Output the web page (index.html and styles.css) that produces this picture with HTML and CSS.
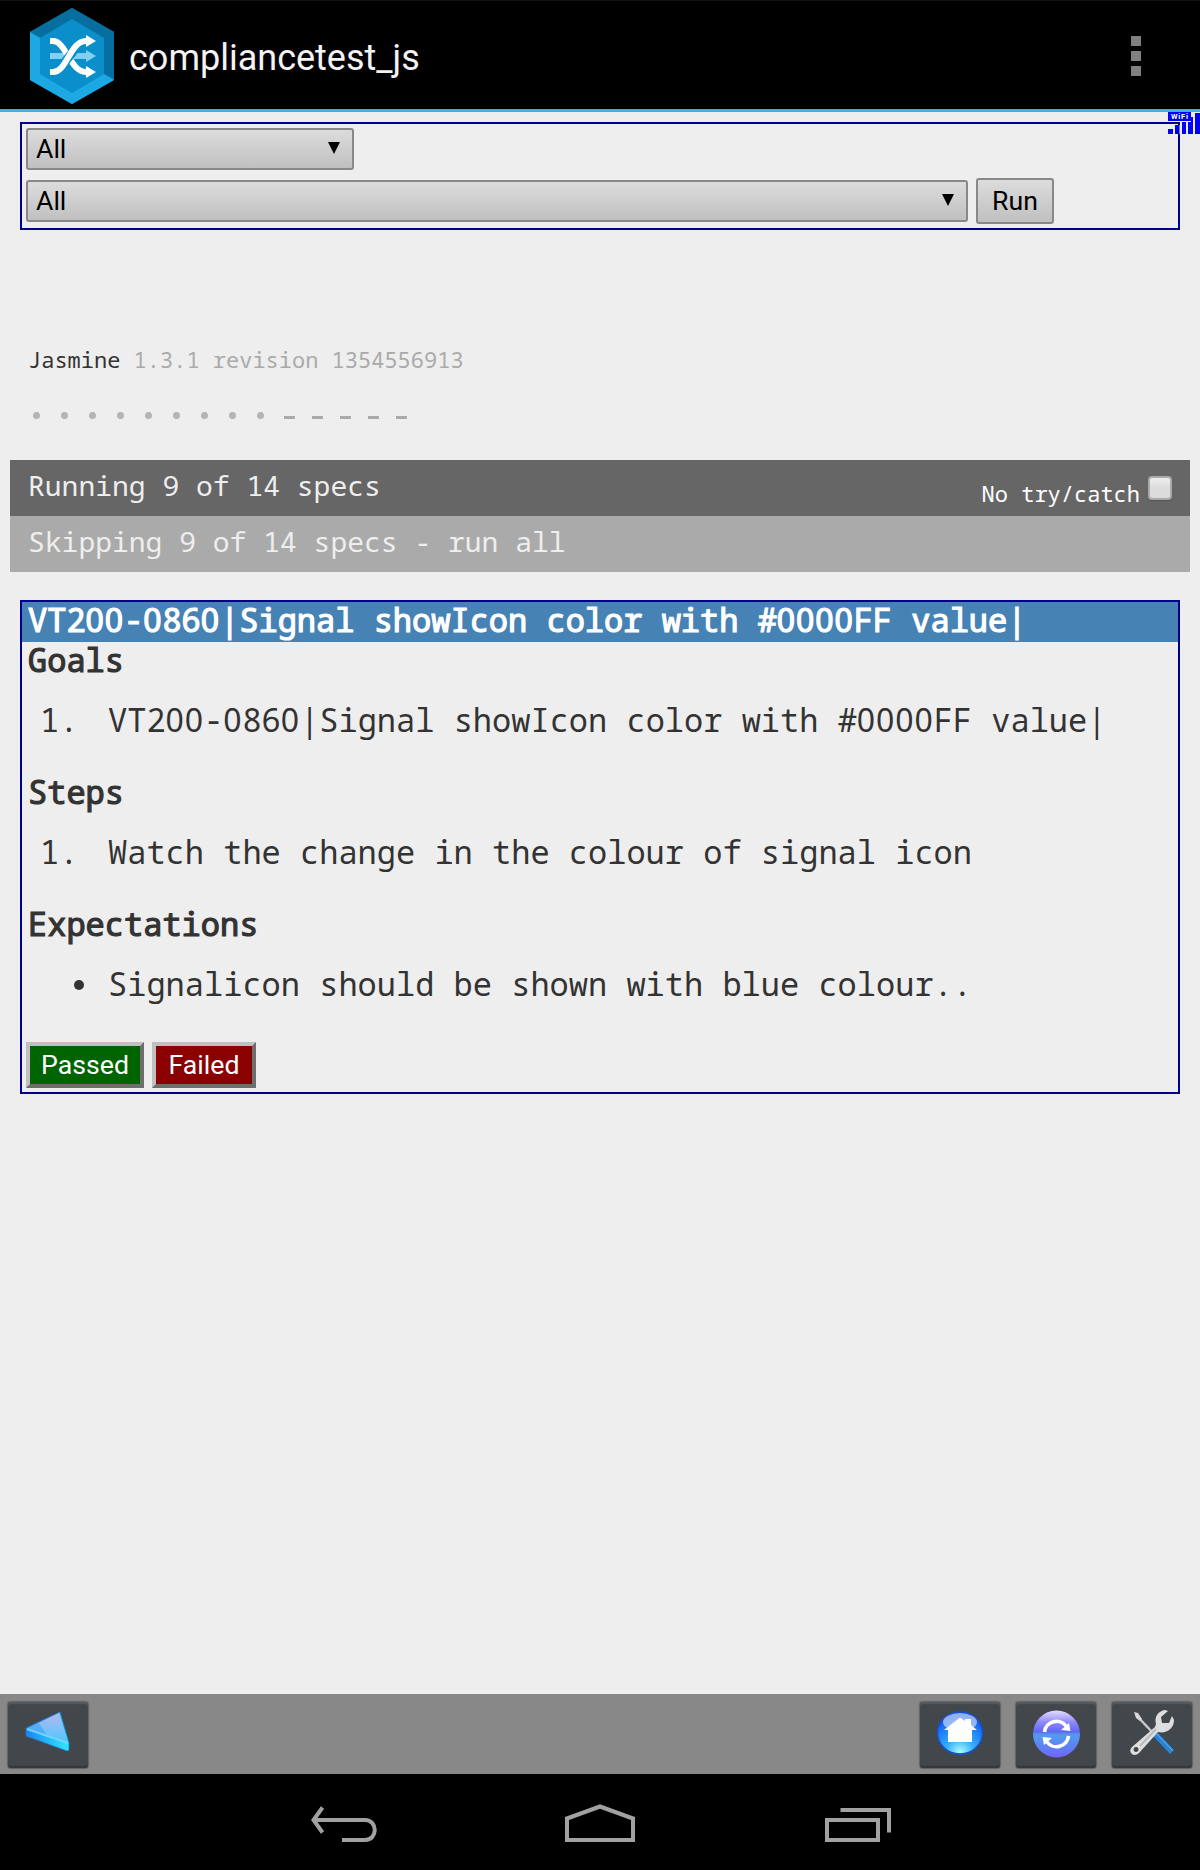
FILE: index.html
```html
<!DOCTYPE html>
<html lang="en">
<head>
<meta charset="utf-8">
<title>compliancetest_js</title>
<link rel="stylesheet" href="styles.css">
</head>
<body>
<header class="action-bar">
  <svg class="logo" width="84" height="96" viewBox="0 0 84 96">
    <path fill="#0a8fca" d="M42 0 84 24V72L42 96 0 72V24Z"/>
    <path fill="#066f9f" d="M0 24 42 0 84 24V72L74 66V30L42 11 10 30Z"/>
    <path fill="#1ca9e3" d="M0 24 10 30V66L42 85 74 66 84 72 42 96 0 72Z"/>
    <g fill="none" stroke-width="6">
      <path stroke="#7fd0f2" d="M20 48H58"/>
      <path stroke="#fff" d="M20 33h3c13 0 17 31 33 31h2"/>
      <path stroke="#0a8fca" stroke-width="9" d="M31 59 49 36"/>
      <path stroke="#fff" d="M20 64h3c14 0 17-31 33-31h2"/>
    </g>
    <path fill="#7fd0f2" d="M56 42 66 48 56 54Z"/>
    <path fill="#fff" d="M56 27 66 33 56 39ZM56 58 66 64 56 70Z"/>
  </svg>
  <h1 class="app-title">compliancetest_js</h1>
  <div class="overflow"><i></i><i></i><i></i></div>
</header>

<main class="page">
  <svg class="signal" width="32" height="22" viewBox="0 0 32 22">
    <path fill="#eee" d="M0 0H24V10H0ZM5 13H32V22H5Z" opacity=".5"/>
    <path fill="#00f" d="M0 0H23V9H0ZM0 17H5V22H0ZM7 13H11V22H7ZM14 10H18V22H14ZM20 10H23V5H25V22H20ZM27 1H32V22H27Z"/>
    <text x="3" y="7.2" textLength="17" class="signal-label">WiFi</text>
  </svg>

  <section class="filters">
    <div class="select select-short"><span>All</span><b></b></div>
    <div class="filter-row">
      <div class="select select-long"><span>All</span><b></b></div>
      <button class="run">Run</button>
    </div>
  </section>

  <section class="reporter">
    <div class="banner">Jasmine <span>1.3.1 revision 1354556913</span></div>
    <div class="symbols">
      <i class="dot"></i><i class="dot"></i><i class="dot"></i><i class="dot"></i><i class="dot"></i><i class="dot"></i><i class="dot"></i><i class="dot"></i><i class="dot"></i><i class="dash"></i><i class="dash"></i><i class="dash"></i><i class="dash"></i><i class="dash"></i>
    </div>
    <div class="bar running"><span>Running 9 of 14 specs</span><label class="catch">No try/catch<i class="check"></i></label></div>
    <div class="bar skipping"><span>Skipping 9 of 14 specs - run all</span></div>
  </section>

  <section class="spec">
    <h2 class="spec-title">VT2<span class="zero">00</span>-<span class="zero">0</span>86<span class="zero">0</span>|Signal showIcon color with #<span class="zero">0000</span>FF value|</h2>
    <h3>Goals</h3>
    <div class="item"><span class="num">1.</span><span>VT2<span class="zero">00</span>-<span class="zero">0</span>86<span class="zero">0</span>|Signal showIcon color with #<span class="zero">0000</span>FF value|</span></div>
    <h3>Steps</h3>
    <div class="item"><span class="num">1.</span><span>Watch the change in the colour of signal icon</span></div>
    <h3>Expectations</h3>
    <div class="item"><span class="num"><i class="bullet"></i></span><span>Signalicon should be shown with blue colour..</span></div>
    <div class="verdict"><button class="passed">Passed</button><button class="failed">Failed</button></div>
  </section>
</main>

<div class="toolbar">
  <div class="tool tool-back">
    <svg width="80" height="66" viewBox="0 0 80 66">
      <defs>
        <linearGradient id="tri" x1=".7" y1="0" x2=".6" y2="1"><stop offset="0" stop-color="#b9b6ea"/><stop offset=".5" stop-color="#7fc0f8"/><stop offset="1" stop-color="#4cc4ff"/></linearGradient>
        <linearGradient id="edge"><stop offset="0" stop-color="#1a86f5"/><stop offset="1" stop-color="#2fe8ff"/></linearGradient>
      </defs>
      <path fill="url(#edge)" stroke="#2476c8" stroke-width=".8" d="M18 26 52 10 61 41V48L59 49 18 34Z"/>
      <path fill="url(#tri)" d="M20 26 51 11 60 41Z"/>
      <path fill="#2a92f6" opacity=".45" d="M20 26 31 21 39 34Z"/>
      <path fill="none" stroke="#72d4ff" stroke-width="2" d="M19 27 60 41"/>
    </svg>
  </div>
  <div class="tool">
    <svg width="80" height="66" viewBox="0 0 80 66">
      <defs><radialGradient id="home" cx=".5" cy=".95" r=".9"><stop offset="0" stop-color="#a8ffff"/><stop offset=".35" stop-color="#36aefa"/><stop offset=".8" stop-color="#176df5"/><stop offset="1" stop-color="#1650d8"/></radialGradient></defs>
      <ellipse cx="40" cy="31" rx="22.500" ry="21" fill="url(#home)" stroke="#1452cc" stroke-width="1.500"/>
      <ellipse cx="40" cy="20" rx="17" ry="9" fill="#d5e2ff" opacity=".65"/>
      <path fill="#fff" d="M24 28 40 15.500 45 19V17H51V23L57 28H52V40H28V28Z"/>
    </svg>
  </div>
  <div class="tool">
    <svg width="80" height="66" viewBox="0 0 80 66">
      <defs><linearGradient id="sync" x2="0" y2="1"><stop offset="0" stop-color="#e4dfff"/><stop offset=".25" stop-color="#8f89fa"/><stop offset=".45" stop-color="#6266f8"/><stop offset=".52" stop-color="#529cec"/><stop offset=".75" stop-color="#5d83f4"/><stop offset="1" stop-color="#7464ff"/></linearGradient></defs>
      <circle cx="40.500" cy="32" r="23.500" fill="url(#sync)"/>
      <path fill="none" stroke="#fff" stroke-width="3.600" d="M28.500 30A12 12 0 0 1 50 24M52.500 34A12 12 0 0 1 31 40"/>
      <path fill="#fff" d="M45 28 54.500 29 53 21ZM36 36 26.500 35 28 43Z"/>
    </svg>
  </div>
  <div class="tool">
    <svg width="80" height="66" viewBox="0 0 80 66">
      <path stroke="#1f4f7c" stroke-width="7.500" d="M43 32 60 50"/>
      <path stroke="#2c83ce" stroke-width="5.500" d="M43 32 60 50"/>
      <path stroke="#6db4ec" stroke-width="1" d="M45 32 61 49"/>
      <path stroke="#c9c9c9" stroke-width="2.500" d="M25 14 42 32"/>
      <path fill="#d8d8d8" d="M22 10 26 11 30 17 28 19 24 16Z"/>
      <path fill="#dedede" fill-rule="evenodd" d="M56 9 53 8C46 9 42 15 44 22L43 25 20 45C15 50 22 56 27 51L46 30C54 32 62 27 62 18L60 14 57 21 50 21 49 15ZM24 45A2.500 2.500 0 1 0 24.100 45Z"/>
      <path stroke="#bbb" stroke-width="2" d="M28 44 44 27"/>
    </svg>
  </div>
</div>

<nav class="system-nav">
  <svg width="80" height="60" viewBox="0 0 80 60"><path d="M12 25H63C76 25 76 45 63 45H40M20.500 12.500 11.500 25 20.500 37.500"/></svg>
  <svg width="80" height="60" viewBox="0 0 80 60"><path d="M7 23.500 40 11.500 73 23.500V45H7Z"/></svg>
  <svg width="80" height="60" viewBox="0 0 80 60"><path d="M9 25H60V45H9ZM22.500 15H71V37.500"/></svg>
</nav>
</body>
</html>
```
FILE: styles.css
```css
* { box-sizing: border-box; }
body {
  margin: 0;
  width: 1200px;
  height: 1870px;
  display: flex;
  flex-direction: column;
  background: #eee;
  color: #333;
  font-family: "Droid Sans Mono", "Noto Sans Mono", "Liberation Mono", monospace;
}
h1, h2, h3 { margin: 0; }
svg { display: block; }

.action-bar {
  height: 112px;
  flex: none;
  display: flex;
  background: #000;
  border-bottom: 3px solid #33b5e5;
  border-top: 1px solid #111;
  padding: 7px 59px 0 30px;
}
.app-title {
  margin: 29px 0 0 15px;
  font: 400 36px/42px Roboto, sans-serif;
  color: #f3f3f3;
}
.overflow {
  margin: 28px 0 0 auto;
  display: flex;
  flex-direction: column;
  gap: 5px;
}
.overflow i { width: 10px; height: 10px; background: #808080; }

.page { position: relative; flex: 1; padding: 10px 10px 0; }
.signal { position: absolute; right: 0; top: 0; }
.signal-label { font: 700 7.500px Roboto, sans-serif; fill: #fff; }

.filters {
  margin: 0 10px;
  height: 108px;
  border: 2px solid #00008b;
  padding: 4px;
}
.filter-row { display: flex; align-items: center; gap: 8px; margin-top: 8px; }
.select {
  height: 42px;
  display: flex;
  justify-content: space-between;
  border: 2px solid #888;
  border-radius: 3px;
  background: linear-gradient(#dcdcdc, #c0c0c0);
  padding: 0 12px 0 8px;
  font: 26.670px/38px Roboto, sans-serif;
  color: #000;
}
.select b {
  margin-top: 12px;
  width: 12px;
  height: 12px;
  background: #000;
  clip-path: polygon(0 0, 100% 0, 50% 100%);
}
.select-short { width: 328px; }
.select-long { width: 942px; }
.run {
  width: 78px;
  height: 46px;
  border: 2px solid #888;
  border-radius: 3px;
  background: linear-gradient(#dcdcdc, #c0c0c0);
  padding: 0;
  font: 26.670px/40px Roboto, sans-serif;
  color: #000;
}

.banner { margin: 113px 18px 0; font-size: 22px; line-height: 32px; }
.banner span { color: #aaa; }
.symbols { display: flex; height: 85px; padding: 37px 0 0 13px; }
.symbols i { width: 28px; height: 7px; }
.dot { background: radial-gradient(circle at 13.500px 3.500px, #b4b4b4 3.200px, transparent 3.900px); }
.dash { background: linear-gradient(#aaa, #aaa) 9px 4px / 11px 3px no-repeat; }
.bar {
  height: 56px;
  display: flex;
  justify-content: space-between;
  padding: 0 18px;
  font-size: 28px;
  line-height: 51px;
  color: #eee;
}
.running { background: #666; }
.skipping { background: #aaa; }
.catch { display: flex; font-size: 22px; line-height: 66px; color: #fff; }
.check {
  margin: 16px 0 0 8px;
  width: 24px;
  height: 24px;
  border: 2px solid #aaa;
  border-radius: 4px;
  background: linear-gradient(#eee, #dcdcdc 50%);
  box-shadow: 0 1px 1px #555;
}

.spec {
  margin: 28px 10px 0;
  height: 494px;
  border: 2px solid #00008b;
  font-size: 32px;
  line-height: 36px;
}
.spec-title,
.spec h3 {
  height: 40px;
  padding-left: 6px;
  font-size: 32px;
  font-weight: 400;
  line-height: 36px;
  -webkit-text-stroke: 1.200px currentColor;
}
.spec-title { background: #4682b4; color: #fff; }
.zero { font-family: "Noto Sans", sans-serif; letter-spacing: .028em; line-height: 1; }
.item { display: flex; height: 40px; margin: 20px 0 32px; }
.num { width: 86px; padding-left: 18px; }
.bullet { display: block; margin: 14px 0 0 34px; width: 10px; height: 10px; border-radius: 50%; background: #333; }
.verdict { display: flex; gap: 8px; margin: 36px 0 0 4px; }
.verdict button {
  height: 46px;
  padding: 0;
  border: 4px solid;
  border-color: #c0c0c0 #6e6e6e #6e6e6e #c0c0c0;
  color: #fff;
  font: 26.670px/36px Roboto, sans-serif;
}
.verdict .passed { width: 118px; background: #006400; }
.verdict .failed { width: 104px; background: #8b0000; }

.toolbar {
  flex: none;
  height: 80px;
  display: flex;
  gap: 16px;
  padding: 8px;
  background: #888;
}
.tool {
  width: 80px;
  height: 66px;
  border-radius: 3px;
  background: #42474b;
  box-shadow: inset 0 2px 1px #565b5e, inset 0 -2px 1px #34383b, 0 0 1px 1px #606366;
}
.tool-back { margin-right: auto; }

.system-nav {
  flex: none;
  height: 96px;
  display: flex;
  justify-content: center;
  gap: 178px;
  padding-top: 21px;
  background: #000;
}
.system-nav path { fill: none; stroke: #a1a1a1; stroke-width: 4; }
```
